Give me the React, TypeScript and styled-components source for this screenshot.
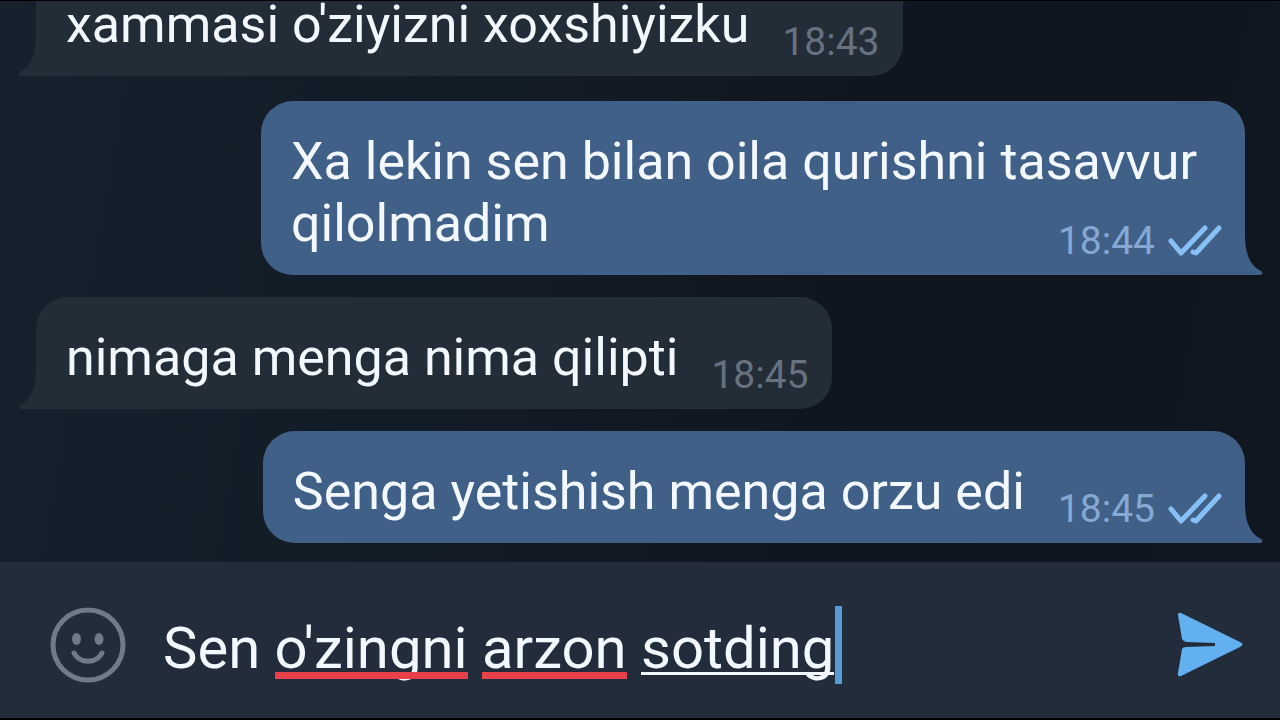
import React, { useState } from "react";
import styled, { createGlobalStyle } from "styled-components";

const GlobalStyle = createGlobalStyle`
  *, *::before, *::after { box-sizing: border-box; }
  body { margin: 0; background: #000; }
  body, button, input { font-family: Roboto, "Liberation Sans", sans-serif; }
`;

const colors = {
  incoming: "#232d38",
  outgoing: "#406088",
  panel: "#222c3a",
  text: "#f3f8ff",
  accent: "#569bd6",
};

const Screen = styled.div`
  display: flex;
  flex-direction: column;
  height: 100vh;
  border-top: 1px solid #000;
  border-bottom: 2px solid #000;
  background: linear-gradient(100deg, #16212d 0%, #121c27 35%, #101620 65%, #111721 100%);
`;

const Messages = styled.main`
  flex: 1;
  min-height: 0;
  overflow: hidden;
  display: flex;
  flex-direction: column;
  justify-content: flex-end;
  gap: 22px;
  padding: 0 35px 19px 36px;
`;

const Bubble = styled.article<{ $own?: boolean; $last?: boolean }>`
  position: relative;
  display: flow-root;
  flex-shrink: 0;
  align-self: ${(p) => (p.$own ? "flex-end" : "flex-start")};
  max-width: min(984px, 100%);
  margin-bottom: ${(p) => (p.$last ? "3px" : "0")};
  padding: 30px 23px 0 30px;
  border-radius: ${(p) => (p.$own ? "32px 32px 0 32px" : "32px 32px 32px 0")};
  background: ${(p) => (p.$own ? colors.outgoing : colors.incoming)};
  color: ${colors.text};
  font-size: 52px;
  line-height: 62px;
`;

const Meta = styled.span<{ $own?: boolean }>`
  float: right;
  display: flex;
  align-items: center;
  gap: 13px;
  margin: 28px 0 14px 33px;
  color: ${(p) => (p.$own ? "#85a8d4" : "#67717f")};
  font-size: 39px;
  line-height: 40px;
`;

const Tail = styled.svg<{ $own?: boolean }>`
  position: absolute;
  bottom: 0;
  ${(p) => (p.$own ? "left: calc(100% - 1px);" : "right: calc(100% - 1px); transform: scaleX(-1);")}
  width: 19px;
  height: 40px;
  fill: ${(p) => (p.$own ? colors.outgoing : colors.incoming)};
`;

const Composer = styled.form`
  display: flex;
  align-items: center;
  height: 156px;
  padding: 10px 36px 0 48px;
  background: ${colors.panel};
`;

const IconButton = styled.button`
  display: flex;
  flex: none;
  padding: 0;
  border: 0;
  background: none;
  cursor: pointer;
`;

const Field = styled.div`
  flex: 1;
  min-width: 0;
  display: grid;
  align-items: center;
  margin: 0 24px 0 35px;
  font-size: 58px;
  line-height: 78px;
  & > * { grid-area: 1 / 1; }
`;

const TextInput = styled.input`
  width: 100%;
  height: 82px;
  padding: 6px 0 0;
  border: 0;
  outline: 0;
  background: none;
  color: ${colors.text};
  caret-color: ${colors.accent};
  font-size: inherit;
  line-height: inherit;
`;

const Marks = styled.div`
  display: flex;
  height: 78px;
  overflow: hidden;
  pointer-events: none;
  color: transparent;
  white-space: pre;
`;

const Word = styled.span<{ $mark: "none" | "error" | "composing" }>`
  position: relative;
  &::after {
    content: "";
    position: absolute;
    top: 66px;
    left: 0;
    right: 0;
    height: ${(p) => (p.$mark === "error" ? "7px" : p.$mark === "composing" ? "3px" : "0")};
    background: ${(p) => (p.$mark === "error" ? "#e8414a" : colors.text)};
  }
`;

const Caret = styled.span`
  width: 7px;
  height: 78px;
  margin-left: 1px;
  background: ${colors.accent};
`;

type Message = { text: string; time: string; own?: boolean; last?: boolean };

const messages: Message[] = [
  { text: "xammasi o'ziyizni xoxshiyizku", time: "18:43", last: true },
  { text: "Xa lekin sen bilan oila qurishni tasavvur qilolmadim", time: "18:44", own: true },
  { text: "nimaga menga nima qilipti", time: "18:45" },
  { text: "Senga yetishish menga orzu edi", time: "18:45", own: true },
];

const misspelled = ["o'zingni", "arzon"];

const ReadTicks = () => (
  <svg width="54" height="32" viewBox="0 0 54 32" fill="none" stroke="#87c0f6" strokeWidth="5" strokeLinecap="round" strokeLinejoin="round" role="img" aria-label="Read">
    <path d="M3 16 L13 28 L37 3" />
    <path d="M25 27 L28 28 L51 3" />
  </svg>
);

const MessageBubble = ({ text, time, own, last }: Message) => (
  <Bubble $own={own} $last={last}>
    {text}
    <Meta $own={own}>
      <time>{time}</time>
      {own && <ReadTicks />}
    </Meta>
    <Tail $own={own} viewBox="0 0 19 40" aria-hidden="true">
      <path d="M0 0 H1 C1 17 5 30 17 36 Q20 38 17 40 H0 Z" />
    </Tail>
  </Bubble>
);

export default function App() {
  const [draft, setDraft] = useState("Sen o'zingni arzon sotding");
  const words = draft.split(/( )/);
  return (
    <Screen>
      <GlobalStyle />
      <Messages>
        {messages.map((m) => (
          <MessageBubble key={m.text} {...m} />
        ))}
      </Messages>
      <Composer onSubmit={(e) => e.preventDefault()}>
        <IconButton type="button" aria-label="Emoji">
          <svg width="80" height="80" viewBox="0 0 80 80" fill="none" stroke="#6f7b89" strokeWidth="5" strokeLinecap="round">
            <circle cx="40" cy="40" r="35" />
            <path d="M26 48 C32 59 48 59 54 48" />
            <ellipse cx="28.500" cy="34" rx="4.500" ry="6" fill="#6f7b89" stroke="none" />
            <ellipse cx="51" cy="34" rx="4.500" ry="6" fill="#6f7b89" stroke="none" />
          </svg>
        </IconButton>
        <Field>
          <TextInput aria-label="Message" value={draft} onChange={(e) => setDraft(e.target.value)} />
          <Marks aria-hidden="true">
            {words.map((w, i) => (
              <Word key={i} $mark={misspelled.includes(w) ? "error" : i === words.length - 1 ? "composing" : "none"}>
                {w}
              </Word>
            ))}
            <Caret />
          </Marks>
        </Field>
        <IconButton type="submit" aria-label="Send">
          <svg width="72" height="72" viewBox="0 0 72 72" fill="#62b0f0">
            <path d="M6 6 Q6 3 9 4 L68 33 Q73 35 68 38 L9 67 Q5 68 6 64 L10 40 Q11 38 14 38 L43 37 V34 L14 33 Q11 32 10 30 Z" />
          </svg>
        </IconButton>
      </Composer>
    </Screen>
  );
}
